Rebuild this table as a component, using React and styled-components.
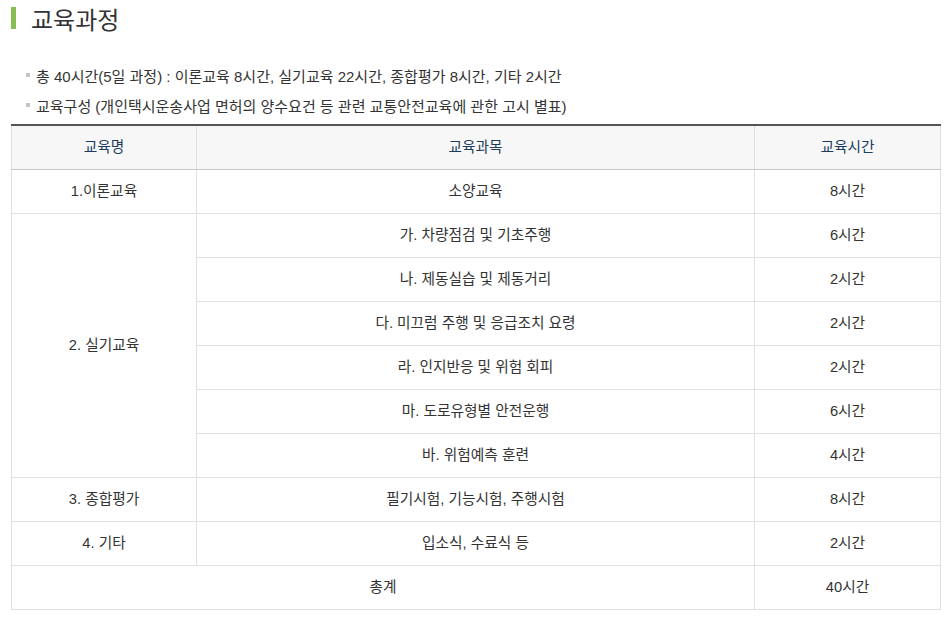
import React from 'react'
import styled, { createGlobalStyle } from 'styled-components';

const Global = createGlobalStyle`
  body {
    margin: 0;
    background: #fff;
    font-family: "Liberation Sans", "Noto Sans CJK KR", sans-serif;
    color: #333;
  }
`;

const Page = styled.div`
  padding: 5px 11px 0 11px;
  width: 929px;
`;

const Title = styled.h2`
  display: flex;
  align-items: center;
  margin: 0;
  height: 26px;
  font-family: "Noto Sans CJK KR", sans-serif;
  font-size: 24px;
  font-weight: 400;
  color: #333;
  &::before {
    content: '';
    width: 5px;
    height: 22px;
    background: #8bbd55;
    margin-right: 15px;
  }
`;

const List = styled.ul`
  list-style: none;
  margin: 29px 0 0 0;
  padding: 0 0 0 15px;
`;

const Item = styled.li`
  display: flex;
  align-items: center;
  height: 30px;
  font-size: 15px;
  color: #333;
  &::before {
    content: '';
    width: 4px;
    height: 4px;
    background: #c4c4c4;
    margin-right: 6px;
  }
`;

const Table = styled.table`
  width: 100%;
  margin-top: 4px;
  border-collapse: collapse;
  border-top: 2px solid #555;
  table-layout: fixed;
  font-size: 14.7px;
`;

const Th = styled.th`
  height: 44px;
  padding: 0 0 3px;
  box-sizing: border-box;
  background: #f7f7f7;
  border: 1px solid #dedede;
  border-top: none;
  border-bottom: 1px solid #c8c8c8;
  font-weight: 400;
  color: #1c3c5e;
  text-align: center;
`;

const Td = styled.td`
  height: 44px;
  padding: 0 0 3px;
  box-sizing: border-box;
  border: 1px solid #e0e0e0;
  text-align: center;
  color: #333;
`;

const rows = [
  ['가. 차량점검 및 기초주행', '6시간'],
  ['나. 제동실습 및 제동거리', '2시간'],
  ['다. 미끄럼 주행 및 응급조치 요령', '2시간'],
  ['라. 인지반응 및 위험 회피', '2시간'],
  ['마. 도로유형별 안전운행', '6시간'],
  ['바. 위험예측 훈련', '4시간'],
];

const App = () => {
  return (
    <Page>
      <Global />
      <Title>교육과정</Title>
      <List>
        <Item>총 40시간(5일 과정) : 이론교육 8시간, 실기교육 22시간, 종합평가 8시간, 기타 2시간</Item>
        <Item>교육구성 (개인택시운송사업 면허의 양수요건 등 관련 교통안전교육에 관한 고시 별표)</Item>
      </List>
      <Table>
        <colgroup>
          <col style={{ width: 185 }} />
          <col style={{ width: 558 }} />
          <col style={{ width: 186 }} />
        </colgroup>
        <thead>
          <tr>
            <Th>교육명</Th>
            <Th>교육과목</Th>
            <Th>교육시간</Th>
          </tr>
        </thead>
        <tbody>
          <tr>
            <Td>1.이론교육</Td>
            <Td>소양교육</Td>
            <Td>8시간</Td>
          </tr>
          {rows.map((r, i) => (
            <tr key={i}>
              {i === 0 && <Td rowSpan={6}>2. 실기교육</Td>}
              <Td>{r[0]}</Td>
              <Td>{r[1]}</Td>
            </tr>
          ))}
          <tr>
            <Td>3. 종합평가</Td>
            <Td>필기시험, 기능시험, 주행시험</Td>
            <Td>8시간</Td>
          </tr>
          <tr>
            <Td>4. 기타</Td>
            <Td>입소식, 수료식 등</Td>
            <Td>2시간</Td>
          </tr>
          <tr>
            <Td colSpan={2}>총계</Td>
            <Td>40시간</Td>
          </tr>
        </tbody>
      </Table>
    </Page>
  )
}

export default App
